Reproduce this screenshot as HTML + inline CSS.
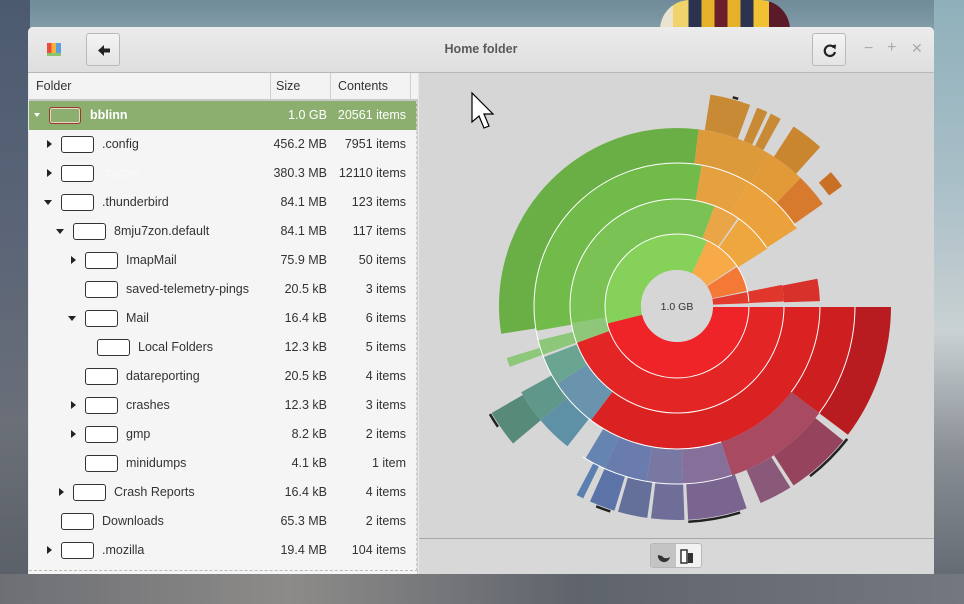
<!DOCTYPE html>
<html><head><meta charset="utf-8"><style>
*{margin:0;padding:0;box-sizing:border-box}
body{width:964px;height:604px;overflow:hidden;position:relative;font-family:"Liberation Sans","DejaVu Sans",sans-serif;font-size:12.5px;
background:linear-gradient(180deg,#6f8a98 0%,#8fa9b3 8%,#7b8a95 40%,#6c7580 70%,#58606a 100%);}
.bg1{position:absolute;left:0;top:0;width:30px;height:604px;background:linear-gradient(180deg,#4c5a70,#5b6577 40%,#6a6f78 70%,#595e66)}
.bg2{position:absolute;left:934px;top:0;width:30px;height:604px;background:linear-gradient(180deg,#8fb0bb 0%,#a9bfc7 30%,#c9d1d3 55%,#8a8f96 75%,#5d636b)}
.bg3{position:absolute;left:0;top:574px;width:964px;height:30px;background:linear-gradient(90deg,#6d6f74,#8d8b89 30%,#5f646c 60%,#737780)}
.balloon{position:absolute;left:660px;top:0;width:130px;height:30px;border-radius:40px 40px 0 0;
background:linear-gradient(90deg,#e9e3d0 0 10%,#f0d36a 10% 22%,#2c3350 22% 32%,#e6b22a 32% 42%,#6b1f2c 42% 52%,#e6b22a 52% 62%,#2c3350 62% 72%,#f0c233 72% 84%,#5a1a28 84%)}
.win{position:absolute;left:28px;top:27px;width:906px;height:547px;background:#e8e8e8;border-radius:5px 5px 0 0;overflow:hidden}
.title{position:absolute;left:0;top:0;width:906px;height:46px;background:linear-gradient(#ececec,#dedede);border-bottom:1px solid #b8b8b8}
.btn{position:absolute;top:6px;width:34px;height:33px;border:1px solid #b9b9b9;border-radius:3px;background:linear-gradient(#f4f4f4,#e4e4e4)}
.ttext{position:absolute;left:0;width:906px;top:15px;text-align:center;font-weight:bold;color:#5a5a5a;font-size:12.5px}
.tree{position:absolute;left:1px;top:46px;width:389px;height:501px;background:#f5f5f5;border-right:1px solid #cfcfcf}
.hdr{position:absolute;left:0;top:0;width:389px;height:28px;background:#f3f3f3;border-bottom:2px solid #c9c9c9;color:#333}
.hdr span{position:absolute;top:6px}
.hdr i{position:absolute;top:0;height:26px;border-left:1px solid #d0d0d0}
.row{position:absolute;left:0;width:388px;height:29px;color:#333}
.row.sel{background:#8cae6f;color:#fff;font-weight:bold}
.row .ic{position:absolute;top:6px;width:33px;height:17px;border:1px solid #333;border-radius:3px;background:#fff}
.row .nm{position:absolute;top:7px}
.row .sz{position:absolute;right:90px;top:7px}
.row .ct{position:absolute;right:11px;top:7px}
.row .ar{position:absolute;top:10px;width:0;height:0}
.ar.r{border-left:5px solid #222;border-top:4.5px solid transparent;border-bottom:4.5px solid transparent}
.ar.d{border-top:5px solid #222;border-left:4.5px solid transparent;border-right:4.5px solid transparent;top:12px!important}
.chart{position:absolute;left:391px;top:46px;width:515px;height:465px;background:#d6d6d6}
.bot{position:absolute;left:391px;top:511px;width:515px;height:36px;background:#d8d8d8;border-top:1px solid #a8a8a8}
</style></head><body>
<div class="bg1"></div><div class="bg2"></div><div class="bg3"></div><div class="balloon"></div>
<div class="win">
 <div class="title">
  <div style="position:absolute;left:19px;top:16px;width:14px;height:13px;background:linear-gradient(90deg,#e94b3c 0 33%,#f4b33b 33% 66%,#5c9ee0 66%);border-bottom:3px solid #8bc46b"></div>
  <div class="btn" style="left:58px"><svg width="34" height="33" viewBox="0 0 34 33"><path d="M11 16.5 L17 11 V14.5 H23 V18.5 H17 V22 Z" fill="#222"/></svg></div>
  <div class="ttext">Home folder</div>
  <div class="btn" style="left:784px"><svg width="34" height="33" viewBox="0 0 34 33"><path d="M21 13.5 A5.2 5.2 0 1 0 22 18" fill="none" stroke="#222" stroke-width="2.2"/><path d="M18 11.5 L23 10.5 L22.5 15.5 Z" fill="#222"/></svg></div>
  <div style="position:absolute;left:836px;top:13px;color:#aaa;font-size:16px">−</div>
  <div style="position:absolute;left:859px;top:12px;color:#aaa;font-size:16px">+</div>
  <div style="position:absolute;left:883px;top:13px;color:#aaa;font-size:14px">✕</div>
 </div>
 <div class="tree">
  <div class="hdr"><span style="left:7px">Folder</span><i style="left:241px"></i><span style="left:247px">Size</span><i style="left:301px"></i><span style="left:309px">Contents</span><i style="left:381px"></i></div>
  <div class="row sel" style="top:28px"><div class="ar d" style="left:5px;border-top-color:#fff;border-top-width:4px;border-left-width:3px;border-right-width:3px"></div><div class="ic" style="left:20px;width:32px;border-color:#9a3a2a;background:#8cae6f;box-shadow:inset 0 0 0 1px #e8d6c8"></div><span class="nm" style="left:61px">bblinn</span><span class="sz" style="font-weight:normal">1.0 GB</span><span class="ct" style="font-weight:normal">20561 items</span></div>
  <div class="row" style="top:57px"><div class="ar r" style="left:18px"></div><div class="ic" style="left:32px"></div><span class="nm" style="left:73px">.config</span><span class="sz">456.2 MB</span><span class="ct">7951 items</span></div>
  <div class="row" style="top:86px"><div class="ar r" style="left:18px"></div><div class="ic" style="left:32px"></div><span class="nm" style="left:73px;color:#fafafa">.cache</span><span class="sz">380.3 MB</span><span class="ct">12110 items</span></div>
  <div class="row" style="top:115px"><div class="ar d" style="left:15px"></div><div class="ic" style="left:32px"></div><span class="nm" style="left:73px">.thunderbird</span><span class="sz">84.1 MB</span><span class="ct">123 items</span></div>
  <div class="row" style="top:144px"><div class="ar d" style="left:27px"></div><div class="ic" style="left:44px"></div><span class="nm" style="left:85px">8mju7zon.default</span><span class="sz">84.1 MB</span><span class="ct">117 items</span></div>
  <div class="row" style="top:173px"><div class="ar r" style="left:42px"></div><div class="ic" style="left:56px"></div><span class="nm" style="left:97px">ImapMail</span><span class="sz">75.9 MB</span><span class="ct">50 items</span></div>
  <div class="row" style="top:202px"><div class="ic" style="left:56px"></div><span class="nm" style="left:97px">saved-telemetry-pings</span><span class="sz">20.5 kB</span><span class="ct">3 items</span></div>
  <div class="row" style="top:231px"><div class="ar d" style="left:39px"></div><div class="ic" style="left:56px"></div><span class="nm" style="left:97px">Mail</span><span class="sz">16.4 kB</span><span class="ct">6 items</span></div>
  <div class="row" style="top:260px"><div class="ic" style="left:68px"></div><span class="nm" style="left:109px">Local Folders</span><span class="sz">12.3 kB</span><span class="ct">5 items</span></div>
  <div class="row" style="top:289px"><div class="ic" style="left:56px"></div><span class="nm" style="left:97px">datareporting</span><span class="sz">20.5 kB</span><span class="ct">4 items</span></div>
  <div class="row" style="top:318px"><div class="ar r" style="left:42px"></div><div class="ic" style="left:56px"></div><span class="nm" style="left:97px">crashes</span><span class="sz">12.3 kB</span><span class="ct">3 items</span></div>
  <div class="row" style="top:347px"><div class="ar r" style="left:42px"></div><div class="ic" style="left:56px"></div><span class="nm" style="left:97px">gmp</span><span class="sz">8.2 kB</span><span class="ct">2 items</span></div>
  <div class="row" style="top:376px"><div class="ic" style="left:56px"></div><span class="nm" style="left:97px">minidumps</span><span class="sz">4.1 kB</span><span class="ct">1 item</span></div>
  <div class="row" style="top:405px"><div class="ar r" style="left:30px"></div><div class="ic" style="left:44px"></div><span class="nm" style="left:85px">Crash Reports</span><span class="sz">16.4 kB</span><span class="ct">4 items</span></div>
  <div class="row" style="top:434px"><div class="ic" style="left:32px"></div><span class="nm" style="left:73px">Downloads</span><span class="sz">65.3 MB</span><span class="ct">2 items</span></div>
  <div class="row" style="top:463px"><div class="ar r" style="left:18px"></div><div class="ic" style="left:32px"></div><span class="nm" style="left:73px">.mozilla</span><span class="sz">19.4 MB</span><span class="ct">104 items</span></div>
  <div style="position:absolute;left:0;top:497px;width:389px;border-top:1px dashed #bbb"></div>
  <div style="position:absolute;left:387px;top:28px;height:470px;border-left:1px dashed #ccc"></div>
 </div>
 <div class="chart">
  <svg width="515" height="465" viewBox="0 0 515 465">
   <g transform="translate(258,233)" fill="none">
    <!-- ring1 r36-72 -->
    <circle r="54" stroke-width="36" pathLength="360" stroke="#ee2428" stroke-dasharray="167 360" stroke-dashoffset="1"/>
    <circle r="54" stroke-width="36" pathLength="360" stroke="#86d15a" stroke-dasharray="129 360" stroke-dashoffset="-166"/>
    <circle r="54" stroke-width="36" pathLength="360" stroke="#f9aa48" stroke-dasharray="31 360" stroke-dashoffset="-295"/>
    <circle r="54" stroke-width="36" pathLength="360" stroke="#f47836" stroke-dasharray="21 360" stroke-dashoffset="-327"/>
    <circle r="54" stroke-width="36" pathLength="360" stroke="#e33a2e" stroke-dasharray="9 360" stroke-dashoffset="-349"/>
    <!-- ring2 r72-107 -->
    <circle r="89.5" stroke-width="35" pathLength="360" stroke="#e32525" stroke-dasharray="161 360" stroke-dashoffset="1"/>
    <circle r="89.5" stroke-width="35" pathLength="360" stroke="#8ec77a" stroke-dasharray="11 360" stroke-dashoffset="-160"/>
    <circle r="89.5" stroke-width="35" pathLength="360" stroke="#79c253" stroke-dasharray="120 360" stroke-dashoffset="-171"/>
    <circle r="89.5" stroke-width="35" pathLength="360" stroke="#e9a546" stroke-dasharray="14 360" stroke-dashoffset="-291"/>
    <circle r="89.5" stroke-width="35" pathLength="360" stroke="#eea63f" stroke-dasharray="22 360" stroke-dashoffset="-306"/>
    <circle r="89.5" stroke-width="35" pathLength="360" stroke="#e0362b" stroke-dasharray="9 360" stroke-dashoffset="-349"/>
    <!-- ring3 r107-143 -->
    <circle r="125" stroke-width="36" pathLength="360" stroke="#da2222" stroke-dasharray="128 360" stroke-dashoffset="1"/>
    <circle r="125" stroke-width="36" pathLength="360" stroke="#6a94ad" stroke-dasharray="20 360" stroke-dashoffset="-127"/>
    <circle r="125" stroke-width="36" pathLength="360" stroke="#6aa592" stroke-dasharray="12 360" stroke-dashoffset="-147"/>
    <circle r="125" stroke-width="36" pathLength="360" stroke="#8dc77a" stroke-dasharray="6 360" stroke-dashoffset="-160"/>
    <circle r="125" stroke-width="36" pathLength="360" stroke="#71bb4b" stroke-dasharray="110 360" stroke-dashoffset="-170"/>
    <circle r="125" stroke-width="36" pathLength="360" stroke="#e5a040" stroke-dasharray="20 360" stroke-dashoffset="-280"/>
    <circle r="125" stroke-width="36" pathLength="360" stroke="#eba23d" stroke-dasharray="27 360" stroke-dashoffset="-300"/>
    <circle r="125" stroke-width="36" pathLength="360" stroke="#d8302a" stroke-dasharray="9 360" stroke-dashoffset="-349"/>
    <!-- ring4 r143-178 -->
    <circle r="160.5" stroke-width="35" pathLength="360" stroke="#cd1f20" stroke-dasharray="38 360" stroke-dashoffset="1"/>
    <circle r="160.5" stroke-width="35" pathLength="360" stroke="#a84a62" stroke-dasharray="35 360" stroke-dashoffset="-37"/>
    <circle r="160.5" stroke-width="35" pathLength="360" stroke="#86709a" stroke-dasharray="16 360" stroke-dashoffset="-72"/>
    <circle r="160.5" stroke-width="35" pathLength="360" stroke="#7878a2" stroke-dasharray="12 360" stroke-dashoffset="-88"/>
    <circle r="160.5" stroke-width="35" pathLength="360" stroke="#6a7cae" stroke-dasharray="14 360" stroke-dashoffset="-100"/>
    <circle r="160.5" stroke-width="35" pathLength="360" stroke="#6585b0" stroke-dasharray="7 360" stroke-dashoffset="-114"/>
    <circle r="160.5" stroke-width="35" pathLength="360" stroke="#5f91a6" stroke-dasharray="12 360" stroke-dashoffset="-128"/>
    <circle r="160.5" stroke-width="35" pathLength="360" stroke="#5f988a" stroke-dasharray="11 360" stroke-dashoffset="-140"/>
    <circle r="160.5" stroke-width="35" pathLength="360" stroke="#8dc77a" stroke-dasharray="3 360" stroke-dashoffset="-160"/>
    <circle r="160.5" stroke-width="35" pathLength="360" stroke="#6aaf45" stroke-dasharray="106 360" stroke-dashoffset="-171"/>
    <circle r="160.5" stroke-width="35" pathLength="360" stroke="#dd9a3b" stroke-dasharray="24 360" stroke-dashoffset="-277"/>
    <circle r="160.5" stroke-width="35" pathLength="360" stroke="#e29a38" stroke-dasharray="13 360" stroke-dashoffset="-301"/>
    <circle r="160.5" stroke-width="35" pathLength="360" stroke="#d87a2e" stroke-dasharray="11 360" stroke-dashoffset="-314"/>
    <!-- ring5 r178-214 -->
    <circle r="196" stroke-width="36" pathLength="360" stroke="#b81c20" stroke-dasharray="38 360" stroke-dashoffset="1"/>
    <circle r="196" stroke-width="36" pathLength="360" stroke="#96445e" stroke-dasharray="18 360" stroke-dashoffset="-39"/>
    <circle r="196" stroke-width="36" pathLength="360" stroke="#8a5878" stroke-dasharray="9 360" stroke-dashoffset="-58"/>
    <circle r="196" stroke-width="36" pathLength="360" stroke="#7a6490" stroke-dasharray="16 360" stroke-dashoffset="-71"/>
    <circle r="196" stroke-width="36" pathLength="360" stroke="#6e6e98" stroke-dasharray="9 360" stroke-dashoffset="-88"/>
    <circle r="196" stroke-width="36" pathLength="360" stroke="#646f9a" stroke-dasharray="8 360" stroke-dashoffset="-98"/>
    <circle r="196" stroke-width="36" pathLength="360" stroke="#5b73a6" stroke-dasharray="7 360" stroke-dashoffset="-107"/>
    <circle r="196" stroke-width="36" pathLength="360" stroke="#5a7fb0" stroke-dasharray="2 360" stroke-dashoffset="-116"/>
    <circle r="196" stroke-width="36" pathLength="360" stroke="#578a78" stroke-dasharray="10 360" stroke-dashoffset="-140"/>
    <circle r="196" stroke-width="36" pathLength="360" stroke="#c98a35" stroke-dasharray="11 360" stroke-dashoffset="-279"/>
    <circle r="196" stroke-width="36" pathLength="360" stroke="#c98a35" stroke-dasharray="3 360" stroke-dashoffset="-292"/>
    <circle r="196" stroke-width="36" pathLength="360" stroke="#c98a35" stroke-dasharray="3 360" stroke-dashoffset="-296"/>
    <circle r="196" stroke-width="36" pathLength="360" stroke="#c9862f" stroke-dasharray="9 360" stroke-dashoffset="-303"/>
    <circle r="196" stroke-width="16" pathLength="360" stroke="#c87025" stroke-dasharray="5 360" stroke-dashoffset="-319"/>
    <!-- separators -->
    <circle r="72" stroke="#fff" stroke-width="1" pathLength="360" stroke-dasharray="358 360" stroke-dashoffset="1"/>
    <circle r="107" stroke="#fff" stroke-width="1" pathLength="360" stroke-dasharray="328 360" stroke-dashoffset="1"/>
    <circle r="143" stroke="#fff" stroke-width="1" pathLength="360" stroke-dasharray="38 360" stroke-dashoffset="1"/>
    <circle r="143" stroke="#fff" stroke-width="1" pathLength="360" stroke-dasharray="254 360" stroke-dashoffset="-72"/>
    <circle r="178" stroke="#fff" stroke-width="1" pathLength="360" stroke-dasharray="38 360" stroke-dashoffset="1"/>
    <circle r="178" stroke="#fff" stroke-width="1" pathLength="360" stroke-dasharray="50 360" stroke-dashoffset="-72"/>
    <line x1="0" y1="0" x2="214" y2="0" stroke="#d6d6d6" stroke-width="2"/>
    <!-- black markers -->
    <circle r="216" stroke="#222" stroke-width="2.5" pathLength="360" stroke-dasharray="14 360" stroke-dashoffset="-73"/>
    <circle r="216" stroke="#222" stroke-width="2.5" pathLength="360" stroke-dasharray="14 360" stroke-dashoffset="-38"/>
    <circle r="216" stroke="#222" stroke-width="2.5" pathLength="360" stroke-dasharray="4 360" stroke-dashoffset="-108"/>
    <circle r="216" stroke="#222" stroke-width="2.5" pathLength="360" stroke-dasharray="4 360" stroke-dashoffset="-146"/>
    <circle r="216" stroke="#222" stroke-width="2.5" pathLength="360" stroke-dasharray="1.5 360" stroke-dashoffset="-285"/>
    <circle r="36" fill="#d6d6d6" stroke="none"/>
    <text x="0" y="4" text-anchor="middle" font-size="10.5" fill="#333" font-family="Liberation Sans,sans-serif">1.0 GB</text>
   </g>
   <path d="M53 20 L53 49 L60 43 L65 55 L70 53 L65 41 L74 41 Z" fill="#fff" stroke="#000" stroke-width="1.2"/>
  </svg>
 </div>
 <div class="bot">
  <div style="position:absolute;left:231px;top:4px;width:52px;height:25px;border:1px solid #b8b8b8;border-radius:3px;background:#f2f2f2;overflow:hidden">
   <div style="position:absolute;left:0;top:0;width:25px;height:25px;background:#c4c4c4"></div>
   <svg width="52" height="25" viewBox="0 0 52 25" style="position:absolute;left:0;top:0"><path d="M7 11 A6 6 0 1 0 19 13 Q14 16 11 12 Z" fill="#333"/><rect x="30" y="6" width="6" height="13" fill="#fff" stroke="#333" stroke-width="1.5"/><rect x="37" y="9" width="5" height="10" fill="#333"/></svg>
  </div>
 </div>
</div>
</body></html>
